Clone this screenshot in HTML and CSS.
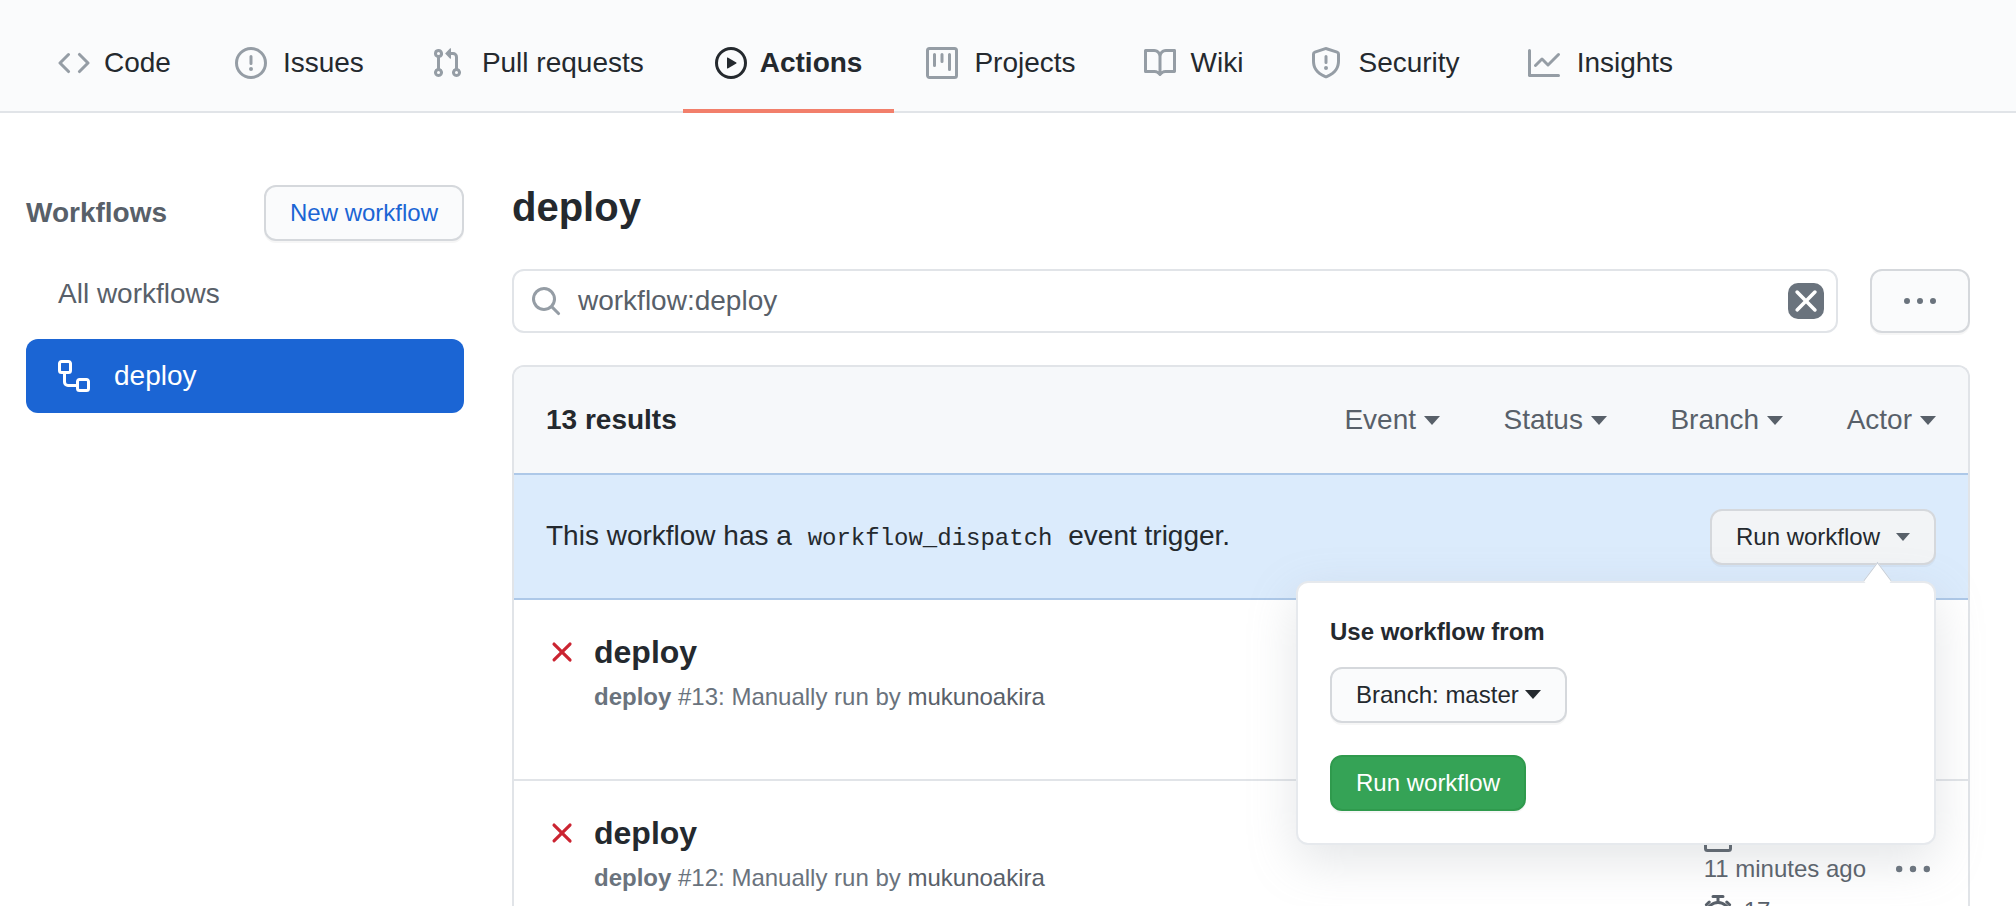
FILE: index.html
```html
<!DOCTYPE html>
<html lang="en">
<head>
  <meta charset="UTF-8">
  <title>Actions - deploy</title>
  <link rel="stylesheet" href="styles.css">
</head>
<body>
  <svg class="sprite" xmlns="http://www.w3.org/2000/svg">
    <symbol id="i-x" viewBox="0 0 16 16"><path d="M3.72 3.72a.75.75 0 011.06 0L8 6.94l3.22-3.22a.75.75 0 111.06 1.06L9.06 8l3.22 3.22a.75.75 0 11-1.06 1.06L8 9.06l-3.22 3.22a.75.75 0 01-1.06-1.06L6.94 8 3.72 4.78a.75.75 0 010-1.06z"/></symbol>
    <symbol id="i-dots" viewBox="0 0 16 16"><path d="M8 9.5a1.5 1.5 0 100-3 1.5 1.5 0 000 3zM1.5 9.5a1.5 1.5 0 100-3 1.5 1.5 0 000 3zm13 0a1.5 1.5 0 100-3 1.5 1.5 0 000 3z"/></symbol>
  </svg>

  <nav class="tabs">
    <a class="tab tab-code">
      <svg class="icon" viewBox="0 0 16 16"><path d="M4.72 3.22a.75.75 0 011.06 1.06L2.06 8l3.72 3.72a.75.75 0 11-1.06 1.06L.47 8.53a.75.75 0 010-1.06l4.25-4.25zm6.56 0a.75.75 0 10-1.06 1.06L13.94 8l-3.72 3.72a.75.75 0 101.06 1.06l4.25-4.25a.75.75 0 000-1.06l-4.25-4.25z"/></svg>
      Code
    </a>
    <a class="tab tab-issues">
      <svg class="icon" viewBox="0 0 16 16"><path d="M8 1.5a6.5 6.5 0 100 13 6.5 6.5 0 000-13zM0 8a8 8 0 1116 0A8 8 0 010 8zm9 3a1 1 0 11-2 0 1 1 0 012 0zm-.25-6.25a.75.75 0 00-1.5 0v3.5a.75.75 0 001.5 0v-3.5z"/></svg>
      Issues
    </a>
    <a class="tab tab-pulls">
      <svg class="icon" viewBox="0 0 16 16"><path d="M7.177 3.073L9.573.677A.25.25 0 0110 .854v4.792a.25.25 0 01-.427.177L7.177 3.427a.25.25 0 010-.354zM3.75 2.5a.75.75 0 100 1.5.75.75 0 000-1.5zm-2.25.75a2.25 2.25 0 113 2.122v5.256a2.251 2.251 0 11-1.5 0V5.372A2.25 2.25 0 011.5 3.25zM11 2.5h-1V4h1a1 1 0 011 1v5.628a2.251 2.251 0 101.5 0V5A2.5 2.5 0 0011 2.5zm1 10.25a.75.75 0 111.5 0 .75.75 0 01-1.5 0zM3.75 12a.75.75 0 100 1.5.75.75 0 000-1.5z"/></svg>
      Pull requests
    </a>
    <a class="tab tab-actions active">
      <svg class="icon" viewBox="0 0 16 16"><path d="M1.5 8a6.5 6.5 0 1113 0 6.5 6.5 0 01-13 0zM8 0a8 8 0 100 16A8 8 0 008 0zM6.379 5.227A.25.25 0 006 5.442v5.117a.25.25 0 00.379.214l4.264-2.559a.25.25 0 000-.428L6.379 5.227z"/></svg>
      Actions
    </a>
    <a class="tab tab-projects">
      <svg class="icon" viewBox="0 0 16 16"><path d="M1.75 0A1.75 1.75 0 000 1.75v12.5C0 15.216.784 16 1.75 16h12.5A1.75 1.75 0 0016 14.25V1.75A1.75 1.75 0 0014.25 0H1.75zM1.5 1.75a.25.25 0 01.25-.25h12.5a.25.25 0 01.25.25v12.5a.25.25 0 01-.25.25H1.75a.25.25 0 01-.25-.25V1.75zM11.75 3a.75.75 0 00-.75.75v7.5a.75.75 0 001.5 0v-7.5a.75.75 0 00-.75-.75zm-8.25.75a.75.75 0 011.5 0v5.5a.75.75 0 01-1.5 0v-5.5zM8 3a.75.75 0 00-.75.75v3.5a.75.75 0 001.5 0v-3.5A.75.75 0 008 3z"/></svg>
      Projects
    </a>
    <a class="tab tab-wiki">
      <svg class="icon" viewBox="0 0 16 16"><path d="M0 1.75A.75.75 0 01.75 1h4.253c1.227 0 2.317.59 3 1.501A3.744 3.744 0 0111.006 1h4.245a.75.75 0 01.75.75v10.5a.75.75 0 01-.75.75h-4.507a2.25 2.25 0 00-1.591.659l-.622.621a.75.75 0 01-1.06 0l-.622-.621A2.25 2.25 0 005.258 13H.75a.75.75 0 01-.75-.75V1.75zm8.755 3a2.25 2.25 0 012.25-2.25H14.5v9h-3.757c-.71 0-1.4.201-1.992.572l.004-7.322zm-1.504 7.324l.004-5.073-.002-2.253A2.25 2.25 0 005.003 2.5H1.5v9h3.757a3.75 3.75 0 011.994.574z"/></svg>
      Wiki
    </a>
    <a class="tab tab-security">
      <svg class="icon" viewBox="0 0 16 16"><path d="M7.467.133a1.75 1.75 0 011.066 0l5.25 1.68A1.75 1.75 0 0115 3.48V7c0 1.566-.32 3.182-1.303 4.682-.983 1.498-2.585 2.813-5.032 3.855a1.7 1.7 0 01-1.33 0c-2.447-1.042-4.049-2.357-5.032-3.855C1.32 10.182 1 8.566 1 7V3.48a1.75 1.75 0 011.217-1.667l5.25-1.68zm.61 1.429a.25.25 0 00-.153 0l-5.25 1.68a.25.25 0 00-.174.238V7c0 1.358.275 2.666 1.057 3.86.784 1.194 2.121 2.34 4.366 3.297a.2.2 0 00.154 0c2.245-.956 3.582-2.104 4.366-3.298C13.225 9.666 13.5 8.36 13.5 7V3.48a.25.25 0 00-.174-.237l-5.25-1.68zM9 10.5a1 1 0 11-2 0 1 1 0 012 0zm-.25-5.75a.75.75 0 10-1.5 0v3a.75.75 0 001.5 0v-3z"/></svg>
      Security
    </a>
    <a class="tab tab-insights">
      <svg class="icon" viewBox="0 0 16 16"><path d="M1.5 1.75a.75.75 0 00-1.5 0v12.5c0 .414.336.75.75.75h14.5a.75.75 0 000-1.5H1.5V1.75zm14.28 2.53a.75.75 0 00-1.06-1.06L10 7.94 7.53 5.47a.75.75 0 00-1.06 0L3.22 8.72a.75.75 0 001.06 1.06L7 7.06l2.47 2.47a.75.75 0 001.06 0l5.25-5.25z"/></svg>
      Insights
    </a>
  </nav>

  <div class="page">
    <aside class="sidebar">
      <div class="sidebar-head">
        <h2>Workflows</h2>
        <a class="btn btn-new">New workflow</a>
      </div>
      <a class="side-item">All workflows</a>
      <a class="side-item selected">
        <svg class="icon" viewBox="0 0 16 16"><path d="M0 1.75C0 .784.784 0 1.75 0h3.5C6.216 0 7 .784 7 1.75v3.5A1.75 1.75 0 015.25 7H4v4a1 1 0 001 1h4v-1.25C9 9.784 9.784 9 10.75 9h3.5c.966 0 1.75.784 1.75 1.75v3.5A1.75 1.75 0 0114.25 16h-3.5A1.75 1.75 0 019 14.25v-.75H5A2.5 2.5 0 012.5 11V7h-.75A1.75 1.75 0 010 5.25v-3.5zm1.75-.25a.25.25 0 00-.25.25v3.5c0 .138.112.25.25.25h3.5a.25.25 0 00.25-.25v-3.5a.25.25 0 00-.25-.25h-3.5zm9 9a.25.25 0 00-.25.25v3.5c0 .138.112.25.25.25h3.5a.25.25 0 00.25-.25v-3.5a.25.25 0 00-.25-.25h-3.5z"/></svg>
        deploy
      </a>
    </aside>

    <main class="content">
      <h1>deploy</h1>

      <div class="search-row">
        <div class="search">
          <svg class="icon search-icon" viewBox="0 0 16 16"><path d="M11.5 7a4.5 4.5 0 11-9 0 4.5 4.5 0 019 0zm-.82 4.74a6 6 0 111.06-1.06l3.04 3.04a.75.75 0 11-1.06 1.06l-3.04-3.04z"/></svg>
          <span class="search-text">workflow:deploy</span>
          <span class="search-clear"><svg class="icon"><use href="#i-x"/></svg></span>
        </div>
        <a class="btn btn-more"><svg class="icon"><use href="#i-dots"/></svg></a>
      </div>

      <section class="box">
        <header class="box-head">
          <strong>13 results</strong>
          <div class="filters">
            <span class="filter">Event <i class="caret"></i></span>
            <span class="filter">Status <i class="caret"></i></span>
            <span class="filter">Branch <i class="caret"></i></span>
            <span class="filter">Actor <i class="caret"></i></span>
          </div>
        </header>

        <div class="banner">
          <p>This workflow has a <code>workflow_dispatch</code> event trigger.</p>
          <div class="dispatch">
            <a class="btn btn-run">Run workflow <i class="caret"></i></a>
            <div class="popover">
              <h4>Use workflow from</h4>
              <a class="btn btn-branch">Branch: master <i class="caret"></i></a>
              <a class="btn btn-green">Run workflow</a>
            </div>
          </div>
        </div>

        <article class="run">
          <svg class="icon run-status"><use href="#i-x"/></svg>
          <div class="run-main">
            <h3>deploy</h3>
            <p><b>deploy</b> #13: Manually run by <span>mukunoakira</span></p>
          </div>
        </article>

        <article class="run">
          <svg class="icon run-status"><use href="#i-x"/></svg>
          <div class="run-main">
            <h3>deploy</h3>
            <p><b>deploy</b> #12: Manually run by <span>mukunoakira</span></p>
          </div>
          <div class="run-meta">
            <svg class="icon" viewBox="0 0 16 16"><path d="M4.75 0a.75.75 0 01.75.75V2h5V.75a.75.75 0 011.5 0V2h1.25c.966 0 1.75.784 1.75 1.75v10.5A1.75 1.75 0 0113.25 16H2.75A1.75 1.75 0 011 14.25V3.75C1 2.784 1.784 2 2.75 2H4V.75A.75.75 0 014.75 0zM2.5 7.5v6.75c0 .138.112.25.25.25h10.5a.25.25 0 00.25-.25V7.5h-11zm11-1.5V3.75a.25.25 0 00-.25-.25H2.75a.25.25 0 00-.25.25V6h11z"/></svg>
            <span class="run-time">11 minutes ago</span>
            <span class="run-duration">
              <svg class="icon icon-stopwatch" viewBox="0 0 16 16"><path d="M5.5.75h5M8 .75v2.5M2.2 4.9l1.4-1.4M13.8 4.9l-1.4-1.4"/><circle cx="8" cy="9.5" r="5.75"/></svg>
              17
            </span>
          </div>
          <a class="run-more"><svg class="icon"><use href="#i-dots"/></svg></a>
        </article>
      </section>
    </main>
  </div>
</body>
</html>
```

FILE: styles.css
```css
html, body { height: 100%; overflow: hidden; }
body { margin: 0; background: #fff; color: #24292e; font-family: "Liberation Sans", Arial, sans-serif; font-size: 28px; }
h1, h2, h3, h4, p { margin: 0; }
.sprite { display: none; }
.icon { display: block; width: 32px; height: 32px; fill: currentColor; fill-rule: evenodd; flex: none; }

/* tabs */
.tabs { display: flex; box-sizing: border-box; height: 113px; padding: 17px 0 0 24px; background: #fafbfc; border-bottom: 2px solid #e1e4e8; }
.tab { display: flex; align-items: center; box-sizing: border-box; height: 96px; padding: 0 32px; border-bottom: 4px solid transparent; color: #24292e; white-space: nowrap; }
.tab .icon { color: #959da5; margin-right: 16px; }
.tab.active { font-weight: bold; border-bottom-color: #f27f6b; }
.tab.active .icon { color: #24292e; }
.tab-code .icon { margin-left: 2px; margin-right: 14px; }
.tab-pulls { margin-right: 7px; }
.tab-pulls .icon { margin-left: 3px; margin-right: 19px; }
.tab-actions .icon { margin-right: 13px; }
.tab-wiki .icon { margin-left: 4px; margin-right: 15px; }
.tab-security .icon { margin-left: 3px; }
.tab-insights .icon { margin-left: 4px; margin-right: 17px; }

/* layout */
.page { display: flex; gap: 48px; padding: 72px 46px 0 26px; }
.sidebar { width: 438px; flex: none; }
.content { flex: 1; min-width: 0; }

/* buttons */
.btn { display: inline-flex; align-items: center; box-sizing: border-box; height: 56px; padding: 0 24px; border: 2px solid #d5d8dc; border-radius: 12px; background: #fafbfc; box-shadow: 0 2px 0 rgba(27, 31, 35, .04); font-size: 24px; color: #24292e; white-space: nowrap; }
.caret { display: inline-block; width: 0; height: 0; border-style: solid; border-width: 9px 8px 0; border-color: currentColor transparent transparent; }

/* sidebar */
.sidebar-head { display: flex; align-items: center; justify-content: space-between; margin-bottom: 16px; }
.sidebar-head h2 { font-size: 28px; color: #586069; }
.btn-new { color: #1b65d4; width: 200px; justify-content: center; padding: 0; }
.side-item { display: flex; align-items: center; height: 74px; padding: 0 32px; margin-bottom: 8px; border-radius: 12px; color: #586069; }
.side-item.selected { background: #1b65d4; color: #fff; }
.side-item .icon { margin-right: 24px; }

/* search */
.content h1 { font-size: 40px; line-height: 44px; margin-bottom: 40px; }
.search-row { display: flex; gap: 32px; margin-bottom: 32px; }
.search { flex: 1; display: flex; align-items: center; box-sizing: border-box; height: 64px; padding: 0 12px 0 16px; border: 2px solid #e1e4e8; border-radius: 12px; color: #586069; }
.search-icon { color: #959da5; margin-right: 16px; }
.search-text { flex: 1; }
.search-clear { display: flex; align-items: center; justify-content: center; width: 36px; height: 36px; border-radius: 10px; background: #6a737d; color: #fff; }
.search-clear .icon { width: 38px; height: 38px; }
.btn-more { width: 100px; height: 64px; justify-content: center; padding: 0; color: #6a737d; }

/* results box */
.box { border: 2px solid #e1e4e8; border-bottom: 0; border-radius: 12px 12px 0 0; }
.box-head { display: flex; align-items: center; justify-content: space-between; height: 106px; padding: 0 32px; background: #f6f8fa; border-radius: 10px 10px 0 0; }
.filters { display: flex; gap: 63.5px; }
.filter { display: flex; align-items: center; gap: 8px; color: #586069; }

.banner { display: flex; align-items: center; justify-content: space-between; height: 123px; padding: 0 32px; background: #dbebfc; border-top: 2px solid #adc8e8; border-bottom: 2px solid #adc8e8; }
.banner p { margin-top: -2px; }
.banner code { font-family: "Liberation Mono", monospace; font-size: 24px; padding: 0 8px; }
.dispatch { position: relative; }
.btn-run { padding: 0 24px; background: #f2f4f6; gap: 16px; }
.btn-run .caret { color: #586069; border-width: 8px 7.5px 0; }

.popover { position: absolute; z-index: 5; top: 72px; right: 0; box-sizing: border-box; width: 640px; height: 264px; padding: 34px 32px 0; background: #fff; border: 2px solid #e6e9ed; border-radius: 12px; box-shadow: 0 16px 48px rgba(149, 157, 165, .25); }
.popover::before { content: ""; position: absolute; top: -14px; right: 45px; width: 22px; height: 22px; background: #fff; border-top: 1px solid #c4ccd6; border-left: 1px solid #c4ccd6; transform: rotate(45deg) skew(8deg, 8deg); }
.popover h4 { font-size: 24px; line-height: 30px; margin-bottom: 20px; }
.btn-branch { display: flex; width: 237px; gap: 6px; margin-bottom: 32px; }
.btn-green { background: #35a356; border-color: #2f9a4d; color: #fff; }

/* runs */
.run { display: flex; box-sizing: border-box; height: 181px; padding: 32px 38px 0 32px; border-bottom: 2px solid #e1e4e8; }
.run-status { color: #cb2431; width: 34px; height: 34px; margin: 3px 15px 0 -1px; }
.run-main { flex: 1; }
.run h3 { font-size: 32px; line-height: 40px; margin-bottom: 7px; }
.run p { font-size: 24px; line-height: 36px; color: #6a737d; }
.run p b { color: #6a737d; }
.run p span { color: #586069; }
.run-meta { display: flex; flex-direction: column; align-items: flex-start; margin-top: 7px; font-size: 24px; color: #586069; }
.run-meta > .icon { margin-left: -2px; }
.run-time { line-height: 34px; margin-bottom: 9px; }
.run-duration { display: flex; align-items: center; gap: 10px; }
.icon-stopwatch { margin-left: -2px; fill: none; stroke: currentColor; stroke-width: 1.5; stroke-linecap: round; }
.run-more { margin: 39px 0 0 30px; color: #6a737d; }
.run-more .icon { width: 34px; height: 34px; }
```
